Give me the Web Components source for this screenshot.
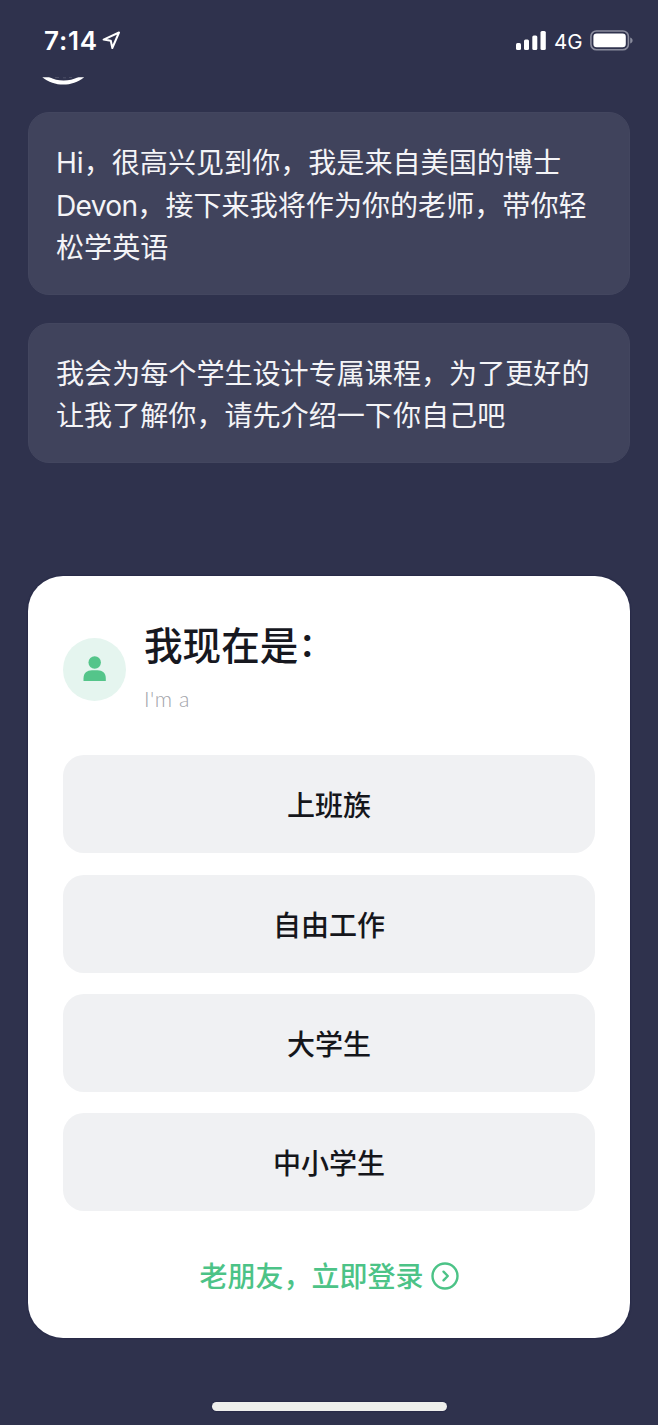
<!DOCTYPE html>
<html lang="zh-CN">
<head>
<meta charset="utf-8">
<title>自我介绍</title>
<style>
html, body { margin: 0; background: #2f324d; }
body { font-family: Inter, "Noto Sans CJK SC", sans-serif; }
</style>
</head>
<body>
<intro-screen></intro-screen>
<script>
const define = (name, html) => {
  const t = document.createElement('template');
  t.innerHTML = html;
  customElements.define(name, class extends HTMLElement {
    constructor() {
      super();
      this.attachShadow({ mode: 'open' }).append(t.content.cloneNode(true));
    }
  });
};

define('status-bar', `
<style>
:host { display: flex; align-items: flex-start; height: 76px; box-sizing: border-box; padding: 25px 24px 0 44px; color: #fff; }
.time { font-size: 26px; line-height: 32px; font-weight: 600; width: 57px; white-space: nowrap; letter-spacing: .8px; }
.arrow { margin-top: 5px; }
.right { margin-left: auto; display: flex; align-items: flex-start; }
.net { font-size: 20.5px; line-height: 33px; margin-left: 8px; width: 36px; white-space: nowrap; }
svg { display: block; }
</style>
<span class="time">7:14</span>
<svg class="arrow" width="20" height="20" viewBox="0 0 20 20" fill="none" stroke="#fff" stroke-width="2" stroke-linejoin="round"><path d="M2.600 9.600 18 2.500 11.300 18 9.800 10.700Z"/></svg>
<div class="right">
<svg width="30" height="28" viewBox="0 0 30 28" fill="#fff"><rect x="0" y="18" width="5" height="7" rx="1.5"/><rect x="8" y="14.5" width="5" height="10.5" rx="1.5"/><rect x="16.3" y="10.5" width="5" height="14.5" rx="1.5"/><rect x="24.5" y="6" width="5.3" height="19" rx="1.5"/></svg>
<span class="net">4G</span>
<svg width="44" height="28" viewBox="0 0 44 28"><rect x=".9" y="6" width="37.5" height="18.8" rx="5.5" fill="none" stroke="#8a8c9d" stroke-width="1.6"/><rect x="3.4" y="8.6" width="32.4" height="13.6" rx="3.3" fill="#fff"/><path d="M40.2 12.5c3.2 1 3.2 5 0 6z" fill="#8a8c9d"/></svg>
</div>`);

define('teacher-avatar', `
<style>
:host { display: block; height: 36.2px; padding-left: 35px; }
svg { display: block; }
</style>
<svg width="60" height="12" viewBox="0 0 60 12"><path d="M7.3 1.2H49.2C37 11 19.500 11 7.300 1.200Z" fill="#fff"/><path d="M14 1C23 5.800 34 5.800 43.500 1V0H14Z" fill="#2f324d"/><path d="M20 1.500h4M28 1.800h3M34 1.500h3" stroke="#4b4e65" stroke-width="1"/></svg>`);

define('chat-bubble', `
<style>
:host { display: block; box-sizing: border-box; margin: 0 28px 28px; padding: 29.3px 27px 25.1px; border-radius: 21px; border: 1px solid #43465f; background: #40435c; color: #f4f4f7; font-size: 28.08px; line-height: 42.1px; white-space: nowrap; }
::slotted(span) { letter-spacing: -.68px; }
</style>
<slot></slot>`);

define('choice-card', `
<style>
:host { display: block; box-sizing: border-box; margin: 0 28px; height: 762px; padding: 43.4px 35px 0; border-radius: 35px; background: #fff; box-shadow: 0 0 2px #171a3c; }
header { display: flex; height: 136.3px; }
.icon { width: 63px; height: 63px; margin: 18.6px 18px 0 0; }
.title { font-size: 38.6px; line-height: 48px; height: 46px; font-weight: 500; color: #17181f; font-family: "Noto Sans CJK SC", sans-serif; white-space: nowrap; }
.sub { font-family: Lato, sans-serif; font-weight: 300; font-size: 21.5px; line-height: 28px; margin-top: 19.6px; color: #a2a4aa; letter-spacing: .5px; }
svg { display: block; }
.choices { display: grid; gap: 21.3px; }
</style>
<header>
<svg class="icon" viewBox="0 0 63 63"><circle cx="31.500" cy="31.500" r="31.500" fill="#e5f5ef"/><circle cx="31.700" cy="24.500" r="6.200" fill="#54c58a"/><path d="M20.500 43V40.500C20.500 35 24 32.300 29 32.300H34.500C39.500 32.300 42.800 35 42.800 40.500V43Z" fill="#54c58a"/></svg>
<div><div class="title"><slot name="title"></slot></div><div class="sub"><slot name="subtitle"></slot></div></div>
</header>
<div class="choices"><slot></slot></div>
<slot name="footer"></slot>`);

define('choice-option', `
<style>
:host { display: flex; align-items: center; justify-content: center; height: 98px; border-radius: 21px; background: #f0f1f3; color: #15161b; font-size: 28px; line-height: 42px; font-weight: 500; }
span { padding-top: 4px; }
</style>
<span><slot></slot></span>`);

define('login-link', `
<style>
:host { display: flex; justify-content: center; align-items: center; gap: 7px; margin-top: 42.4px; height: 42px; color: #4cc387; font-size: 28px; line-height: 42px; font-weight: 500; }
span { padding-top: 4px; }
svg { display: block; margin-top: 3px; }
</style>
<span><slot></slot></span>
<svg width="28" height="28" viewBox="0 0 28 28" fill="none" stroke="#4cc387" stroke-width="2.400"><circle cx="14" cy="14" r="12.500"/><path d="M12.500 9.700 16.800 14 12.500 18.300" stroke-linecap="round" stroke-linejoin="round"/></svg>`);

define('home-indicator', `
<style>
:host { display: block; width: 235px; height: 9px; margin: 64.6px auto 0; border-radius: 5px; background: #eeeeec; box-shadow: 0 0 2px #171a3c; }
</style>`);

define('intro-screen', `
<style>
:host { display: block; width: 658px; height: 1425px; overflow: hidden; background: #2f324d; }
choice-card { margin-top: 112.2px; }
.colon { font-size: 32px; font-weight: 700; margin-left: 1px; vertical-align: 4px; line-height: 0; }
</style>
<status-bar></status-bar>
<teacher-avatar></teacher-avatar>
<chat-bubble>Hi，很高兴见到你，我是来自美国的博士<br><span>Devon</span>，接下来我将作为你的老师，带你轻<br>松学英语</chat-bubble>
<chat-bubble>我会为每个学生设计专属课程，为了更好的<br>让我了解你，请先介绍一下你自己吧</chat-bubble>
<choice-card>
<span slot="title">我现在是<span class="colon">：</span></span>
<span slot="subtitle">I'm a</span>
<choice-option>上班族</choice-option>
<choice-option>自由工作</choice-option>
<choice-option>大学生</choice-option>
<choice-option>中小学生</choice-option>
<login-link slot="footer">老朋友，立即登录</login-link>
</choice-card>
<home-indicator></home-indicator>`);
</script>
</body>
</html>
